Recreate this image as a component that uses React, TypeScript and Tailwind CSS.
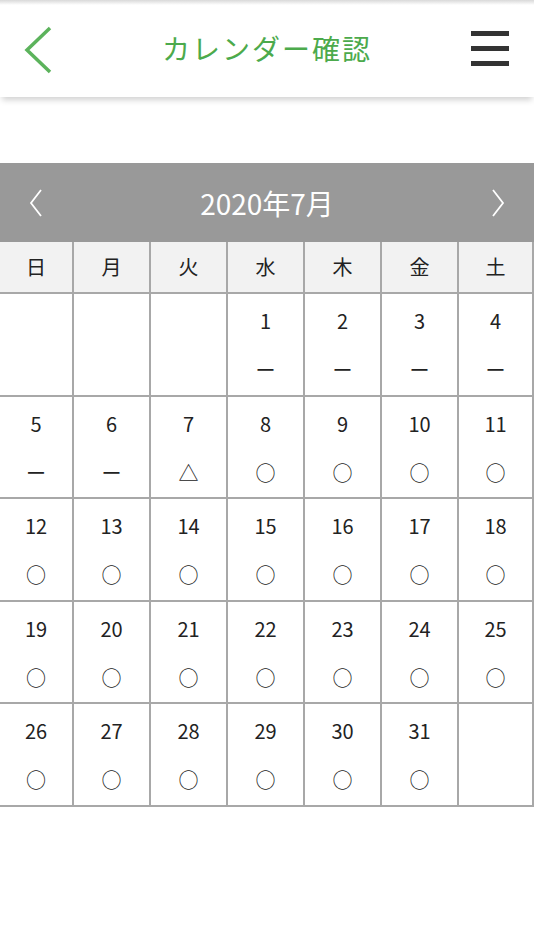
import React from 'react';

const font = { fontFamily: '"Noto Sans CJK JP", "Noto Sans", sans-serif' };

type Cell = { day?: number; mark?: string };

const weekdays = ['日', '月', '火', '水', '木', '金', '土'];

function buildCells(): Cell[] {
  const cells: Cell[] = [{}, {}, {}];
  for (let d = 1; d <= 31; d++) {
    let mark = '○';
    if (d <= 6) mark = 'ー';
    else if (d === 7) mark = '△';
    cells.push({ day: d, mark });
  }
  cells.push({});
  return cells;
}

const colClass = 'grid grid-cols-[74px_77px_77px_77px_77px_77px_1fr]';

export default function App() {
  const cells = buildCells();

  return (
    <div className="min-h-[950px] w-[534px] bg-white" style={font}>
      {/* ヘッダー */}
      <div className="h-[5px] bg-gradient-to-b from-[#d9d9d9] to-white" />
      <header className="relative flex h-[92px] items-center justify-center bg-white pb-[6px] shadow-[0_5px_6px_-2px_rgba(0,0,0,0.18)]">
        <button className="absolute left-[22px] top-[20px]">
          <svg width="32" height="50" viewBox="0 0 32 50" fill="none">
            <polyline points="28,3 5,25 28,47" stroke="#5cb35c" strokeWidth="3.5" fill="none" />
          </svg>
        </button>
        <h1 className="text-[28px] tracking-[2px] text-[#4caa4c]">カレンダー確認</h1>
        <button className="absolute right-[25px] top-[26px] flex flex-col gap-[10px]">
          <span className="block h-[5px] w-[38px] bg-[#333]" />
          <span className="block h-[5px] w-[38px] bg-[#333]" />
          <span className="block h-[5px] w-[38px] bg-[#333]" />
        </button>
      </header>

      {/* カレンダー */}
      <div className="mt-[66px]">
        <div className="flex h-[79px] items-center justify-between bg-[#999999] px-[28px] text-white">
          <svg width="16" height="30" viewBox="0 0 16 30" fill="none">
            <polyline points="13,2 3,15 13,28" stroke="#fff" strokeWidth="1.8" fill="none" />
          </svg>
          <span className="text-[28px]">2020年7月</span>
          <svg width="16" height="30" viewBox="0 0 16 30" fill="none">
            <polyline points="3,2 13,15 3,28" stroke="#fff" strokeWidth="1.8" fill="none" />
          </svg>
        </div>

        <div className={`${colClass} h-[52px] border-b-2 border-[#a8a8a8] bg-[#f2f2f2]`}>
          {weekdays.map((w) => (
            <div
              key={w}
              className="flex items-center justify-center border-r-2 border-[#a8a8a8] text-[20px] text-[#222]"
            >
              {w}
            </div>
          ))}
        </div>

        <div className={colClass}>
          {cells.map((c, i) => (
            <div
              key={i}
              className="flex h-[102.5px] flex-col items-center border-b-2 border-r-2 border-[#a8a8a8] pt-[12px] text-[#222]"
            >
              {c.day && (
                <>
                  <span className="text-[20px] leading-[30px]">{c.day}</span>
                  <span className="mt-[22px] text-[20px] leading-[24px]">{c.mark}</span>
                </>
              )}
            </div>
          ))}
        </div>
      </div>
    </div>
  );
}
